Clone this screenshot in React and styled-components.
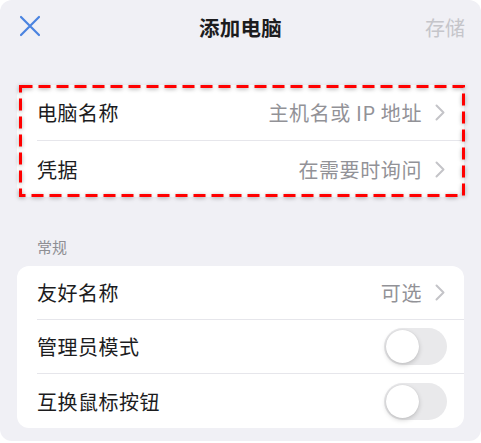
import React from "react";
import styled, { createGlobalStyle } from "styled-components";

const GlobalStyle = createGlobalStyle`
  html, body {
    margin: 0;
    padding: 0;
    background: #ffffff;
  }
  body {
    font-family: "Noto Sans CJK SC", "Noto Sans", "Liberation Sans", sans-serif;
  }
`;

const generalRows = [
  { label: "友好名称", value: "可选", type: "link" },
  { label: "管理员模式", type: "toggle" },
  { label: "互换鼠标按钮", type: "toggle" },
];

const App = () => {
  return (
    <>
      <GlobalStyle />
      <Screen>
        <Header>
          <CloseButton aria-label="关闭">
            <svg width="22" height="22" viewBox="0 0 22 22">
              <path
                d="M2 2 L20 20 M20 2 L2 20"
                stroke="#4a83e0"
                strokeWidth="2.2"
                strokeLinecap="round"
              />
            </svg>
          </CloseButton>
          <Title>添加电脑</Title>
          <SaveButton>存储</SaveButton>
        </Header>

        <Card $highlight>
          <Row>
            <Label>电脑名称</Label>
            <Value>主机名或 IP 地址</Value>
            <Chevron />
          </Row>
          <Row $last>
            <Label>凭据</Label>
            <Value>在需要时询问</Value>
            <Chevron />
          </Row>
          <Highlight>
            <svg width="100%" height="100%">
              <rect
                x="1.5"
                y="1.5"
                width="calc(100% - 3px)"
                height="calc(100% - 3px)"
                fill="none"
                stroke="#ff0000"
                strokeWidth="3"
                strokeDasharray="12 6"
              />
            </svg>
          </Highlight>
        </Card>

        <SectionTitle>常规</SectionTitle>

        <Card>
          {generalRows.map((row, i) => (
            <Row key={row.label} $small $last={i === generalRows.length - 1}>
              <Label>{row.label}</Label>
              {row.type === "link" ? (
                <>
                  <Value>{row.value}</Value>
                  <Chevron />
                </>
              ) : (
                <Toggle>
                  <Knob />
                </Toggle>
              )}
            </Row>
          ))}
        </Card>
      </Screen>
    </>
  );
};

const Chevron = () => (
  <ChevronIcon width="10" height="17" viewBox="0 0 10 17">
    <path
      d="M1.5 1.5 L8.5 8.5 L1.5 15.5"
      fill="none"
      stroke="#c4c4c8"
      strokeWidth="2"
      strokeLinecap="round"
      strokeLinejoin="round"
    />
  </ChevronIcon>
);

const Screen = styled.div`
  width: 481px;
  height: 441px;
  background: #f0f0f5;
  border-radius: 12px;
  box-sizing: border-box;
  padding: 0 17px;
  overflow: hidden;
`;

const Header = styled.div`
  height: 54px;
  display: grid;
  grid-template-columns: 1fr auto 1fr;
  align-items: center;
  margin: 0 -1px;
`;

const CloseButton = styled.div`
  display: flex;
  align-items: center;
  justify-self: start;
  padding-left: 3px;
  margin-top: -2px;
`;

const Title = styled.div`
  font-size: 20.5px;
  font-weight: 600;
  color: #1c1c1e;
  letter-spacing: 0.3px;
`;

const SaveButton = styled.div`
  justify-self: end;
  font-size: 20px;
  color: #c5c5ca;
`;

const Card = styled.div`
  position: relative;
  background: #ffffff;
  border-radius: 12px;
  margin-top: ${(p) => (p.$highlight ? "31px" : "0")};
  padding-left: 20px;
`;

const Highlight = styled.div`
  position: absolute;
  top: 0;
  bottom: 0;
  left: 2px;
  right: -1px;
  pointer-events: none;
  filter: drop-shadow(0 1px 2px rgba(0, 0, 0, 0.35));

  svg {
    display: block;
  }
`;

const Row = styled.div`
  display: flex;
  align-items: center;
  height: ${(p) => (p.$small ? "54px" : "56px")};
  padding-right: 19px;
  border-bottom: ${(p) => (p.$last ? "none" : "1px solid #e6e6eb")};
  box-sizing: border-box;
`;

const Label = styled.div`
  flex: 1;
  font-size: 20px;
  color: #1c1c1e;
  letter-spacing: 0.5px;
`;

const Value = styled.div`
  font-size: 20px;
  color: #929297;
  letter-spacing: 0.6px;
`;

const ChevronIcon = styled.svg`
  margin-left: 13px;
  flex-shrink: 0;
`;

const SectionTitle = styled.div`
  font-size: 15px;
  color: #8e8e93;
  padding-left: 20px;
  margin-top: 40px;
  margin-bottom: 9px;
  line-height: 20px;
`;

const Toggle = styled.div`
  width: 63px;
  height: 37px;
  border-radius: 19px;
  background: #e9e9eb;
  display: flex;
  align-items: center;
  padding: 2px;
  box-sizing: border-box;
  margin-right: -2px;
`;

const Knob = styled.div`
  width: 33px;
  height: 33px;
  border-radius: 50%;
  background: #ffffff;
  box-shadow: 0 2px 5px rgba(0, 0, 0, 0.18), 0 0 1px rgba(0, 0, 0, 0.12);
`;

export default App;
